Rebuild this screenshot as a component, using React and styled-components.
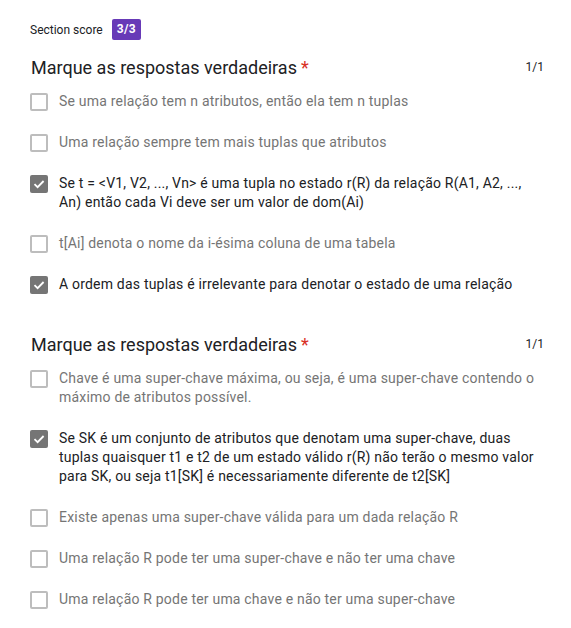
import React from "react";
import styled, { createGlobalStyle } from "styled-components";

const Global = createGlobalStyle`
  body {
    margin: 0;
    background: #fff;
    font-family: Roboto, "Liberation Sans", Arial, sans-serif;
    color: #202124;
  }
`;

const Page = styled.div`
  padding: 19px 27px 20px 30px;
`;

const ScoreRow = styled.div`
  display: flex;
  align-items: center;
  gap: 9px;
  font-size: 12px;
  height: 21px;
`;

const Badge = styled.span`
  background: #673ab7;
  color: #fff;
  font-weight: 700;
  font-size: 12px;
  letter-spacing: 0.3px;
  border-radius: 2px;
  padding: 0 5px;
  height: 21px;
  line-height: 21px;
`;

const Section = styled.div`
  margin-top: ${p => p.first ? "15px" : "38px"};
`;

const TitleRow = styled.div`
  display: flex;
  justify-content: space-between;
  align-items: center;
  height: 24px;
  margin-bottom: 13px;
`;

const Title = styled.div`
  font-size: 18px;
  padding-left: 1px;
  color: #202124;
`;

const Star = styled.span`
  color: #d93025;
  margin-left: 4px;
`;

const Points = styled.span`
  font-size: 12px;
  color: #202124;
`;

const List = styled.div`
  display: flex;
  flex-direction: column;
  gap: 22px;
`;

const Item = styled.div`
  display: flex;
  align-items: flex-start;
`;

const Box = styled.span`
  flex: none;
  box-sizing: border-box;
  width: 18px;
  height: 18px;
  margin: 1px 11px 0 0;
  border-radius: 2px;
  border: ${p => p.checked ? "none" : "2px solid #bdbdbd"};
  background: ${p => p.checked ? "#757575" : "transparent"};
  display: flex;
  align-items: center;
  justify-content: center;
`;

const Label = styled.span`
  font-size: 14px;
  line-height: 19px;
  letter-spacing: 0.2px;
  color: ${p => p.checked ? "#202124" : "#757575"};
`;

const sections = [
  [
    ["Se uma relação tem n atributos, então ela tem n tuplas", false],
    ["Uma relação sempre tem mais tuplas que atributos", false],
    ["Se t = <V1, V2, ..., Vn> é uma tupla no estado r(R) da relação R(A1, A2, ..., An) então cada Vi deve ser um valor de dom(Ai)", true],
    ["t[Ai] denota o nome da i-ésima coluna de uma tabela", false],
    ["A ordem das tuplas é irrelevante para denotar o estado de uma relação", true],
  ],
  [
    ["Chave é uma super-chave máxima, ou seja, é uma super-chave contendo o máximo de atributos possível.", false],
    ["Se SK é um conjunto de atributos que denotam uma super-chave, duas tuplas quaisquer t1 e t2 de um estado válido r(R) não terão o mesmo valor para SK, ou seja t1[SK] é necessariamente diferente de t2[SK]", true],
    ["Existe apenas uma super-chave válida para um dada relação R", false],
    ["Uma relação R pode ter uma super-chave e não ter uma chave", false],
    ["Uma relação R pode ter uma chave e não ter uma super-chave", false],
  ],
];

const Check = () => (
  <svg width="14" height="14" viewBox="0 0 14 14">
    <path d="M2.5 7.2 L5.6 10.2 L11.6 4" fill="none" stroke="#fff" strokeWidth="1.8" />
  </svg>
);

export default function App() {
  return (
    <Page>
      <Global />
      <ScoreRow>
        <span>Section score</span>
        <Badge>3/3</Badge>
      </ScoreRow>
      {sections.map((items, i) => (
        <Section key={i} first={i === 0}>
          <TitleRow>
            <Title>Marque as respostas verdadeiras<Star>*</Star></Title>
            <Points>1/1</Points>
          </TitleRow>
          <List>
            {items.map(([text, checked], j) => (
              <Item key={j}>
                <Box checked={checked}>{checked && <Check />}</Box>
                <Label checked={checked}>{text}</Label>
              </Item>
            ))}
          </List>
        </Section>
      ))}
    </Page>
  );
}
